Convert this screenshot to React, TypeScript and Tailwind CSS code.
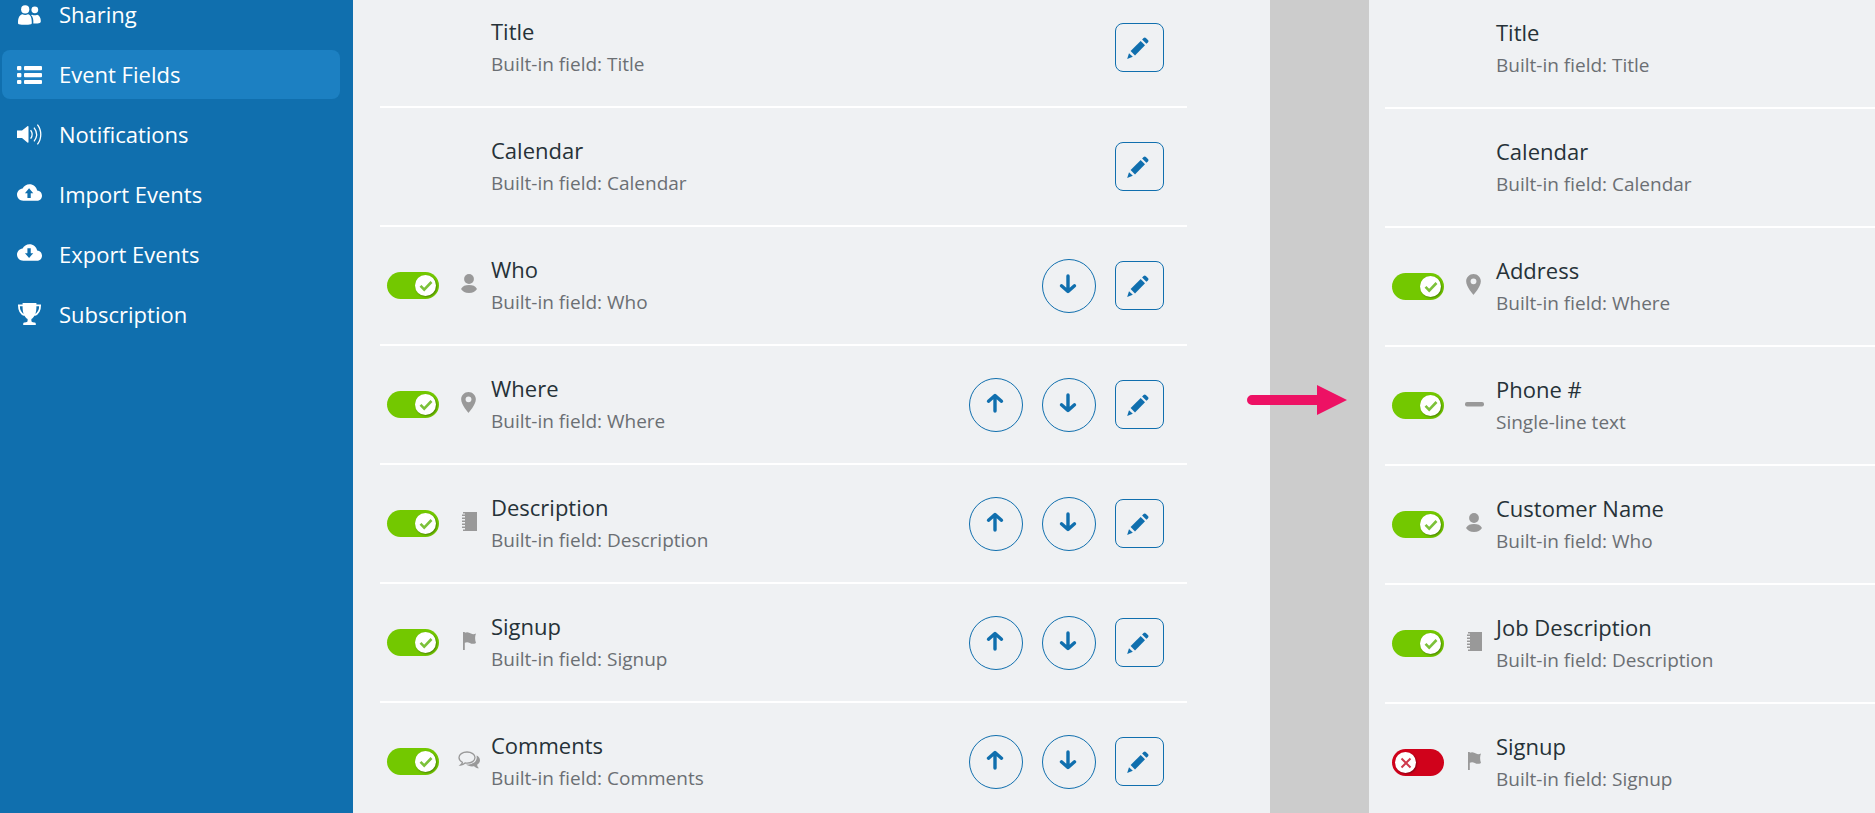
import { useState, type ReactNode } from "react";

type Field = {
  title: string;
  detail: string;
  icon?: ReactNode;
  enabled?: boolean;
  up?: boolean;
  down?: boolean;
};

const CLOUD =
  "M19.35 6.04C18.67 2.59 15.64 0 12 0 9.11 0 6.6 1.64 5.35 4.04 2.34 4.36 0 6.91 0 10c0 3.31 2.69 6 6 6h13c2.76 0 5-2.24 5-5 0-2.64-2.05-4.78-4.65-4.96z";

/* sidebar icons */
const UsersIcon = () => (
  <svg viewBox="0 0 25 20" fill="currentColor" className="w-[25px] h-5">
    <circle cx="8.2" cy="4.4" r="4.1" />
    <circle cx="17.8" cy="4.8" r="3.4" />
    <path d="M1.8 19.2C1.2 19 1 18.4 1 17.4 1 12.6 3 9.6 5.4 9.3c1.8 1 3.8 1 5.6 0 2.4.3 3.8 3.3 3.8 8.1 0 1-.2 1.6-.8 1.8-3.6.7-8.6.7-12.2 0z" />
    <path d="M15.2 9.7c1.6.8 3.4.8 5 0 2.2.5 3.6 3.3 3.6 6.3 0 1.2-.3 1.8-1.1 2-2 .5-4.2.6-6.4.4.3-3.4-.3-6.6-2.3-8.3z" />
  </svg>
);

const ListIcon = () => (
  <svg viewBox="0 0 25 18" fill="currentColor" className="w-[25px] h-[18px]">
    <rect x="0" y="0" width="4.4" height="4.2" rx="1" />
    <rect x="0" y="7" width="4.4" height="4.2" rx="1" />
    <rect x="0" y="14" width="4.4" height="4" rx="1" />
    <rect x="7" y="0" width="18" height="4.2" rx="1" />
    <rect x="7" y="7" width="18" height="4.2" rx="1" />
    <rect x="7" y="14" width="18" height="4" rx="1" />
  </svg>
);

const SoundIcon = () => (
  <svg viewBox="0 0 25 21" fill="none" stroke="currentColor" strokeWidth="1.3" className="w-[25px] h-[21px]">
    <path d="M0 6.6h5L10.4 2.3c.6-.4 1.1-.2 1.1.5v15.2c0 .7-.5.9-1.1.4L5 14H0z" fill="currentColor" stroke="none" />
    <path d="M13.6 6.2c1.9 2.5 1.9 6 0 8.5" />
    <path d="M17 3.6c3.2 4.2 3.2 9.6 0 13.8" />
    <path d="M20.4.6c4.5 5.8 4.5 13.9 0 19.8" />
  </svg>
);

const CloudUpIcon = () => (
  <svg viewBox="0 0 24 16" fill="currentColor" className="w-[25px] h-[17px] mb-1">
    <path fillRule="evenodd" d={CLOUD + "M11.6 4l4 4.600h-2.400v4.600H10V8.600H7.600z"} />
  </svg>
);

const CloudDownIcon = () => (
  <svg viewBox="0 0 24 16" fill="currentColor" className="w-[25px] h-[17px] mb-1">
    <path fillRule="evenodd" d={CLOUD + "M11.6 13.200l4-4.600h-2.400V4H10v4.600H7.600z"} />
  </svg>
);

const TrophyIcon = () => (
  <svg viewBox="0 0 25 23" fill="currentColor" className="w-[25px] h-[23px]">
    <path d="M5.6 0h13.8v4c0 5.6-1.6 10.2-5 11.9v2.2c0 .9 1 1.4 2.8 1.5 1 0 1.6.5 1.6 1.4V22H6.2v-1c0-.9.6-1.4 1.6-1.4 1.8-.1 2.8-.6 2.8-1.5v-2.2C7.2 14.2 5.6 9.6 5.6 4z" />
    <path d="M6 2.4H1.9c0 5.4 2 8.4 5.8 9.8M19 2.4h4.1c0 5.4-2 8.4-5.8 9.8" fill="none" stroke="currentColor" strokeWidth="1.8" />
  </svg>
);

/* field type icons */
const PersonIcon = () => (
  <svg viewBox="0 0 16 19" fill="currentColor" className="w-4 h-[19px]">
    <circle cx="8" cy="5" r="4.9" />
    <path d="M0 15c2-2.9 4-3.9 8-3.9s6 1 8 3.9c-2 2.9-4 4-8 4s-6-1.100-8-4z" />
  </svg>
);

const PinIcon = () => (
  <svg viewBox="0 0 14 20" fill="currentColor" className="w-[15px] h-[21px] mr-px">
    <path fillRule="evenodd" d="M7 0C3.13 0 0 3.13 0 7c0 5.25 7 13 7 13s7-7.75 7-13c0-3.87-3.13-7-7-7zm0 4.200a2.800 2.800 0 110 5.600 2.800 2.800 0 010-5.600z" />
  </svg>
);

const NotebookIcon = () => (
  <svg viewBox="0 0 15 19" fill="currentColor" className="w-[15px] h-[19px]">
    <path d="M1 0h14v19H1v-1.500h2v-1.500H0v-1.500h3v-1.500H0v-1.500h3V10H0V8.500h3V7H0V5.500h3V4H0V2.500h3V1.500H1z" />
  </svg>
);

const FlagIcon = () => (
  <svg viewBox="0 0 13 18" fill="currentColor" className="w-[13px] h-[18px]">
    <path d="M0 0h1.800v.8C4-.4 6 .2 8 1.600c1.700.8 3.300.7 5-.2-1.200 2.900-1.200 6.200 0 9.600-2.200 1.200-4.200 1.100-6.200 0C5 10 3.400 10 1.800 10.700V18H0z" />
  </svg>
);

const CommentsIcon = () => (
  <svg viewBox="0 0 22 18" className="w-[22px] h-[18px]">
    <path
      d="M9 1C4.500 1 1 3.400 1 6.600c0 2 1.300 3.700 3.400 4.700-.2 1-.8 1.900-1.800 2.700 1.900-.1 3.300-.8 4.500-2 .6.1 1.200.2 1.900.2 4.500 0 8-2.400 8-5.600S13.500 1 9 1z"
      fill="none"
      stroke="currentColor"
      strokeWidth="1.3"
    />
    <path d="M18.600 4.500c2.100 1 3.400 2.700 3.400 4.700 0 1.900-1.100 3.400-2.900 4.500.2 1.500.8 2.700 1.900 3.600-2 .1-3.600-.6-5-2-3.200.4-6-.2-7.900-1.700 5.900.1 10.600-2.700 10.600-6.900 0-.7-.1-1.500-.1-2.200z" fill="currentColor" />
  </svg>
);

const LineIcon = () => (
  <svg viewBox="0 0 19 5" className="w-[19px] h-[5px] mt-0.5">
    <rect width="19" height="4.4" rx="2" fill="currentColor" />
  </svg>
);

/* action icons */
const PencilIcon = () => (
  <svg viewBox="0 0 22 22" fill="currentColor" className="w-[22px] h-[22px] mr-1">
    <path d="M16.600 1.100a1.600 1.600 0 012.300 0l2 2a1.600 1.600 0 010 2.300l-1.500 1.400-4.300-4.200z" />
    <path d="M13.700 4l4.300 4.300L8 18.400 3.600 14z" />
    <path d="M2 16.200l3.800 3.500L.2 22z" />
  </svg>
);

const ArrowIcon = ({ up = false }: { up?: boolean }) => (
  <svg
    viewBox="0 0 18 20"
    fill="none"
    stroke="currentColor"
    strokeWidth="3.4"
    strokeLinecap="round"
    strokeLinejoin="round"
    className="w-[18px] h-5 mr-0.5 mb-1"
  >
    <path d={up ? "M9 18V3M2.500 8.200L9 2.500l6.500 5.700" : "M9 2v15M2.500 11.800L9 17.500l6.500-5.700"} />
  </svg>
);

const navItems = [
  { label: "Sharing", icon: <UsersIcon /> },
  { label: "Event Fields", icon: <ListIcon />, active: true },
  { label: "Notifications", icon: <SoundIcon /> },
  { label: "Import Events", icon: <CloudUpIcon /> },
  { label: "Export Events", icon: <CloudDownIcon /> },
  { label: "Subscription", icon: <TrophyIcon /> },
];

const defaultFields: Field[] = [
  { title: "Title", detail: "Built-in field: Title" },
  { title: "Calendar", detail: "Built-in field: Calendar" },
  { title: "Who", detail: "Built-in field: Who", icon: <PersonIcon />, enabled: true, down: true },
  { title: "Where", detail: "Built-in field: Where", icon: <PinIcon />, enabled: true, up: true, down: true },
  { title: "Description", detail: "Built-in field: Description", icon: <NotebookIcon />, enabled: true, up: true, down: true },
  { title: "Signup", detail: "Built-in field: Signup", icon: <FlagIcon />, enabled: true, up: true, down: true },
  { title: "Comments", detail: "Built-in field: Comments", icon: <CommentsIcon />, enabled: true, up: true, down: true },
];

const customFields: Field[] = [
  { title: "Title", detail: "Built-in field: Title" },
  { title: "Calendar", detail: "Built-in field: Calendar" },
  { title: "Address", detail: "Built-in field: Where", icon: <PinIcon />, enabled: true },
  { title: "Phone #", detail: "Single-line text", icon: <LineIcon />, enabled: true },
  { title: "Customer Name", detail: "Built-in field: Who", icon: <PersonIcon />, enabled: true },
  { title: "Job Description", detail: "Built-in field: Description", icon: <NotebookIcon />, enabled: true },
  { title: "Signup", detail: "Built-in field: Signup", icon: <FlagIcon />, enabled: false },
];

function Toggle({ label, initial }: { label: string; initial: boolean }) {
  const [on, setOn] = useState(initial);
  return (
    <label className="relative block w-[52px] h-[27px] cursor-pointer">
      <input
        type="checkbox"
        aria-label={label}
        checked={on}
        onChange={(e) => setOn(e.target.checked)}
        className="block w-full h-full appearance-none rounded-full bg-[#d0021b] checked:bg-[#73c800]"
      />
      <span
        className={
          "absolute top-[3px] flex items-center justify-center w-[21px] h-[21px] rounded-full bg-white shadow-[1px_1px_2px_rgba(0,0,0,0.35)] " +
          (on ? "right-[3px]" : "left-[3px]")
        }
      >
        <svg viewBox="0 0 14 12" fill="none" strokeWidth="2.6" className="w-[14px] h-3">
          {on ? (
            <path d="M1.500 5.800l3.700 3.800L12.500 2" stroke="#7cc13a" />
          ) : (
            <path d="M2.500 1.500l9 9M11.500 1.500l-9 9" stroke="#cf3a4c" strokeWidth="2" />
          )}
        </svg>
      </span>
    </label>
  );
}

function FieldRow({ field, actions }: { field: Field; actions: boolean }) {
  const round = "flex items-center justify-center w-[54px] h-[54px] rounded-full border border-[#106fae]";
  return (
    <li className="flex items-center h-[119px] border-b-2 border-white">
      <div className="w-[52px] ml-[7px] shrink-0">
        {field.enabled !== undefined && <Toggle label={field.title} initial={field.enabled} />}
      </div>
      <div className="w-[22px] ml-[19px] mb-1 shrink-0 flex justify-center text-[#999]">{field.icon}</div>
      <div className="ml-[11px] flex-1 min-w-0">
        <h3 className="text-[22px] leading-[33px] text-[#263238]">{field.title}</h3>
        <p className="text-[19px] leading-[33px] text-[#6b6f73]">{field.detail}</p>
      </div>
      {actions && (
        <div className="flex items-center gap-[19px] mr-[23px] text-[#106fae]">
          {field.up && (
            <button type="button" aria-label={"Move " + field.title + " up"} className={round}>
              <ArrowIcon up />
            </button>
          )}
          {field.down && (
            <button type="button" aria-label={"Move " + field.title + " down"} className={round}>
              <ArrowIcon />
            </button>
          )}
          <button
            type="button"
            aria-label={"Edit " + field.title}
            className="flex items-center justify-center w-[49px] h-[49px] rounded-lg border border-[#106fae]"
          >
            <PencilIcon />
          </button>
        </div>
      )}
    </li>
  );
}

export default function App() {
  return (
    <div className="flex h-screen overflow-hidden bg-[#eff1f3] font-['Open_Sans',sans-serif]">
      {/* sidebar */}
      <nav className="w-[353px] shrink-0 bg-[#106fae] text-white pl-0.5 pr-[13px]">
        <ul className="flex flex-col gap-[11px] -mt-2.5">
          {navItems.map((item) => (
            <li key={item.label}>
              <a
                href="#"
                className={
                  "flex items-center h-[49px] rounded-lg pl-[15px] text-[22px] " + (item.active ? "bg-[#1c80c2]" : "")
                }
              >
                <span className="w-[25px] mr-[17px]">{item.icon}</span>
                {item.label}
              </a>
            </li>
          ))}
        </ul>
      </nav>

      {/* default fields */}
      <main className="flex-1 min-w-0 pl-[27px] pr-[83px]">
        <ul className="-mt-[11px]">
          {defaultFields.map((f) => (
            <FieldRow key={f.title} field={f} actions />
          ))}
        </ul>
      </main>

      {/* divider with arrow */}
      <div className="relative w-[99px] shrink-0 bg-[#ccc]">
        <svg viewBox="0 0 100 30" fill="#ed1164" className="absolute -left-[23px] top-[385px] w-[100px] h-[30px]">
          <path d="M5 10h65V0l30 15-30 15V20H5a5 5 0 010-10z" />
        </svg>
      </div>

      {/* renamed fields */}
      <section className="w-[506px] shrink-0 pl-4">
        <ul className="-mt-2.5">
          {customFields.map((f) => (
            <FieldRow key={f.title} field={f} actions={false} />
          ))}
        </ul>
      </section>
    </div>
  );
}
